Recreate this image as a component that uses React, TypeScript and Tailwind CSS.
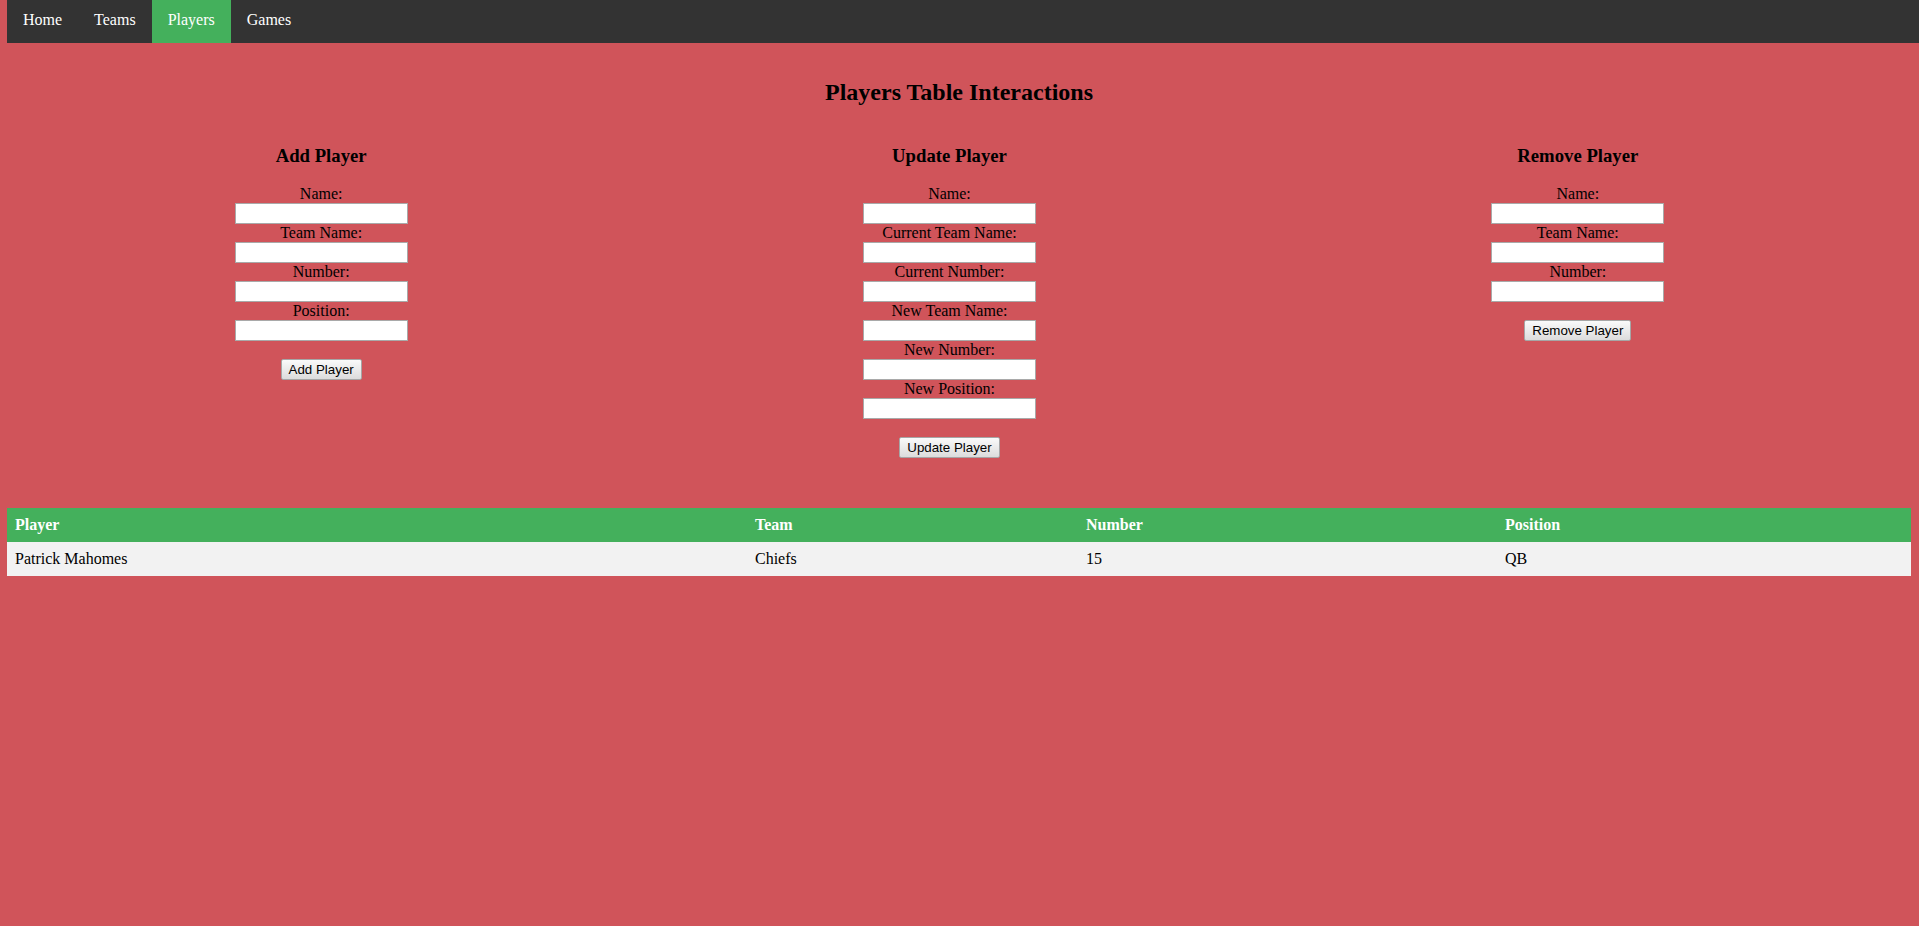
import React from "react";

const navItems = ["Home", "Teams", "Players", "Games"];

function Field({ label }: { label: string }) {
  return (
    <>
      <label className="block h-[18px] leading-[18px] text-[16px] text-black">{label}</label>
      <input
        type="text"
        className="block h-[21px] w-[173px] border border-[#a9a9a9] bg-white outline-none"
      />
    </>
  );
}

function FormCol({ title, fields, button }: { title: string; fields: string[]; button: string }) {
  return (
    <div className="flex flex-col items-center">
      <h3 className="h-[22px] text-[18.72px] font-bold leading-[22px] text-black">{title}</h3>
      <div className="mt-[18px] flex flex-col items-center">
        {fields.map((f) => (
          <Field key={f} label={f} />
        ))}
      </div>
      <button
        type="button"
        className="mt-[18px] h-[21px] rounded-[2px] border border-[#a6a6a6] bg-gradient-to-b from-[#fafafa] to-[#dcdcdc] px-[7px] font-['Liberation_Sans',Arial,sans-serif] text-[13.33px] leading-[19px] text-black"
      >
        {button}
      </button>
    </div>
  );
}

export default function App() {
  return (
    <div className="min-h-[926px] w-[1919px] overflow-hidden bg-[#d0545a] font-['Liberation_Serif','Times_New_Roman',serif] text-[16px]">
      <nav className="ml-[7px] flex h-[43px] w-[1912px] bg-[#333333]">
        {navItems.map((n) => (
          <a
            key={n}
            href="#"
            className={`block h-[43px] px-4 pt-[11px] leading-[18px] text-white ${
              n === "Players" ? "bg-[#44b05c]" : ""
            }`}
          >
            {n}
          </a>
        ))}
      </nav>

      <h2 className="ml-[7px] mt-[35px] h-[28px] w-[1904px] text-center text-[24px] font-bold leading-[28px] text-black">
        Players Table Interactions
      </h2>

      <div className="ml-[7px] mt-[39px] grid w-[1885px] grid-cols-3 items-start">
        <FormCol title="Add Player" fields={["Name:", "Team Name:", "Number:", "Position:"]} button="Add Player" />
        <FormCol
          title="Update Player"
          fields={[
            "Name:",
            "Current Team Name:",
            "Current Number:",
            "New Team Name:",
            "New Number:",
            "New Position:",
          ]}
          button="Update Player"
        />
        <FormCol title="Remove Player" fields={["Name:", "Team Name:", "Number:"]} button="Remove Player" />
      </div>

      <table className="ml-[7px] mt-[50px] w-[1904px] table-fixed border-collapse text-left">
        <colgroup>
          <col className="w-[740px]" />
          <col className="w-[331px]" />
          <col className="w-[419px]" />
          <col className="w-[414px]" />
        </colgroup>
        <thead>
          <tr className="bg-[#44b05c] text-white">
            <th className="px-2 py-2 font-bold leading-[18px]">Player</th>
            <th className="px-2 py-2 font-bold leading-[18px]">Team</th>
            <th className="px-2 py-2 font-bold leading-[18px]">Number</th>
            <th className="px-2 py-2 font-bold leading-[18px]">Position</th>
          </tr>
        </thead>
        <tbody>
          <tr className="bg-[#f2f2f2] text-black">
            <td className="px-2 py-2 leading-[18px]">Patrick Mahomes</td>
            <td className="px-2 py-2 leading-[18px]">Chiefs</td>
            <td className="px-2 py-2 leading-[18px]">15</td>
            <td className="px-2 py-2 leading-[18px]">QB</td>
          </tr>
        </tbody>
      </table>
    </div>
  );
}
